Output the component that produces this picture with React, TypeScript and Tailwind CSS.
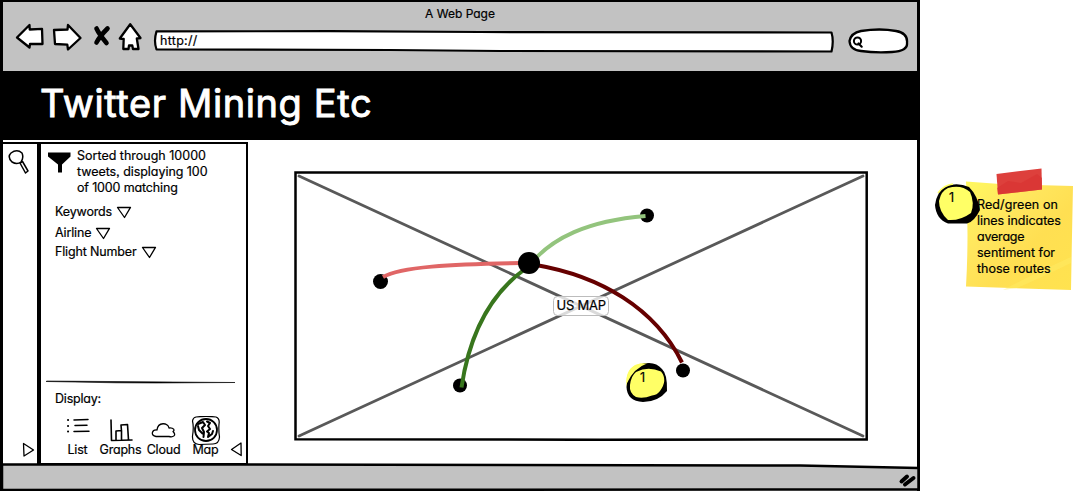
import React from "react";

const ink = { fill: "none", stroke: "#000", strokeLinecap: "round", strokeLinejoin: "round" } as const;

function Toolbar() {
  return (
    <div className="flex h-[44px] items-start">
      <svg className="-mt-[2px] ml-[12px] h-[32px] w-[128px]" viewBox="15 22 128 32">
        <g {...ink} strokeWidth="2.3" fill="#fff">
          <path d="M17 37.5 L29.5 25 L29.7 29.5 L42 28.8 L42.5 44 L30 44 L29.5 47.5 Z" />
          <path d="M54 30 L67.5 29.5 L68 25 L80.500 38 L68 49.500 L67.300 44.700 L55 44 Z" />
          <path d="M130.200 24.200 L140.500 38 L136.800 38.500 L138.500 49 L133 49 L132.300 45.500 L129 45.500 L128.500 49 L123.300 49 L123.700 39 L119.800 38.500 Z" />
        </g>
        <path d="M96.500 28.500 Q99 34 106.500 43 M107.500 28.500 Q100 36 96.500 42.500" {...ink} strokeWidth="4.600" />
      </svg>
      <div className="relative mt-[5px] ml-[10px] flex h-[24px] w-[682px] items-center">
        <svg className="absolute inset-0 h-[24px] w-[682px]" viewBox="153 29 682 24">
          <path d="M156.500 31.300 L330 31.200 L480 32 L831.500 32.500 Q834 41 831.500 51.500 L500 51 L390 50 L156.500 49.500 Q153.500 41 156.500 31.300 Z" {...ink} fill="#fff" strokeWidth="2.200" />
        </svg>
        <span className="relative ml-[7px] text-[12.5px] leading-[18px] tracking-[0.3px]">http://</span>
      </div>
      <svg className="mt-[3px] ml-[12px] h-[28px] w-[64px]" viewBox="847 27 64 28">
        <path d="M861 31 Q880 28 896 31 Q908 33 907 43 Q908 51 892 52 Q875 53 861 51 Q850 50 849.500 41 Q851 33 861 31 Z" {...ink} fill="#fff" strokeWidth="2.300" />
        <circle cx="857.500" cy="41" r="3.600" {...ink} strokeWidth="2" />
        <path d="M858.500 43.500 L861.700 46.700" {...ink} strokeWidth="2.200" />
      </svg>
    </div>
  );
}

function FilterRow({ label, className }: { label: string; className: string }) {
  return (
    <div className={`flex items-center gap-[4px] pl-[14px] ${className}`}>
      <span className="tracking-[-0.15px]">{label}</span>
      <svg className="h-[13px] w-[16px]" viewBox="0 0 16 13">
        <path d="M1.500 1.500 L14.500 1.300 L8.500 11.500 Z" {...ink} strokeWidth="1.300" />
      </svg>
    </div>
  );
}

function DisplayItem({ label, width, children }: { label: string; width: string; children: React.ReactNode }) {
  return (
    <div className={`flex flex-col items-center ${width}`}>
      <svg className="h-[30px] w-[30px]" viewBox="0 0 30 30">{children}</svg>
      <span className="-mt-[4px] leading-[16px] tracking-[-0.2px] whitespace-nowrap">{label}</span>
    </div>
  );
}

function SidePanel() {
  return (
    <aside className="flex h-[323px] w-[209px] flex-none flex-col border-[2.5px] border-black pt-[3px]">
      <div className="flex">
        <svg className="mt-[5px] ml-[7px] h-[22px] w-[24px]" viewBox="0 0 24 22">
          <path d="M0 .5 H22.500 V4.500 L14 12.500 V20.500 H10 V12.500 L0 4.500 Z" fill="#000" />
        </svg>
        <p className="mt-[1px] ml-[5px] leading-[16px] whitespace-nowrap">
          <span className="block">Sorted through 10000</span>
          <span className="block tracking-[-0.05px]">tweets, displaying 100</span>
          <span className="block tracking-[-0.15px]">of 1000 matching</span>
        </p>
      </div>
      <FilterRow label="Keywords" className="mt-[7px] h-[18px]" />
      <FilterRow label="Airline" className="mt-[3px] h-[18px]" />
      <FilterRow label="Flight Number" className="mt-[1px] h-[18px]" />
      <svg className="mt-[119px] ml-[5px] h-[6px] w-[190px]" viewBox="0 0 190 6">
        <path d="M0 1.500 L1 1 L100 1.800 L189 2.500 L110 3 L70 2.800 Z" fill="#000" stroke="#000" strokeWidth=".6" />
      </svg>
      <div className="mt-[5px] ml-[14px] leading-[16px] tracking-[-0.2px]">Display:</div>
      <div className="mt-[9px] flex items-start">
        <div className="ml-[15px] flex flex-none">
          <DisplayItem label="List" width="w-[43px]">
            <g {...ink} strokeWidth="1.500">
              <path d="M11 4 L25 3.500 M12 9.500 L24 9.300 M11 15.500 L26 15.200" />
              <path d="M5 4 h.1 M5 10 h.1 M5 15.500 h.1" strokeWidth="2" />
            </g>
          </DisplayItem>
          <DisplayItem label="Graphs" width="w-[43px]">
            <path d="M5 4 L5.500 24.500 L26 24 M10 24 V15 L15.500 14.500 V24 M15.500 15 L15 9 L21.500 8.500 L22.500 24" {...ink} strokeWidth="1.600" />
          </DisplayItem>
          <DisplayItem label="Cloud" width="w-[43px]">
            <path d="M7 20.500 C1 19.500 3 13.500 8 14 C9 5.500 19 6.500 20 12 C25 11.500 26 14.500 24 15.500 C28 19.500 24 21.500 20 20.500 Z" {...ink} strokeWidth="1.300" />
          </DisplayItem>
          <DisplayItem label="Map" width="w-[41px]">
            <path d="M5 1 Q15 -.3 25 1 Q29 2.500 28 8 Q27.500 15 28.500 21 Q28 28 22 28 L8 28.500 Q1 28 1.500 20 Q3 11 1.500 5 Q2 1.500 5 1" {...ink} strokeWidth="1.200" />
            <circle cx="15" cy="14" r="11" {...ink} strokeWidth="1.800" />
            <path d="M7 8 L12 6 L14 9 L11 12 L13 16 L12.500 21 M7 10 L8 14 L11.500 17.500 M16 5.500 L19 7 L17 10 L19 13 L16 15.500 L18 17 L17 21 L21 18 L22 15" {...ink} strokeWidth="2" />
          </DisplayItem>
        </div>
        <svg className="mt-[25px] ml-[4px] h-[16px] w-[13px]" viewBox="0 0 13 16">
          <path d="M11 2 L11.200 14.500 L1.500 8.500 Z" {...ink} strokeWidth="1.300" />
        </svg>
      </div>
    </aside>
  );
}

function MapArea() {
  return (
    <main className="relative mt-[29px] ml-[46px] h-[270px] w-[574px]">
      <svg className="h-[270px] w-[574px]" viewBox="294 171 574 270">
        <path d="M295.500 172.500 H866.700 V439.500 L600 439.800 L295.500 439.200 Z" {...ink} fill="#fff" strokeWidth="2.500" strokeLinejoin="miter" />
        <path d="M299 176 L863 436 M299 436 L863 176" {...ink} stroke="#595959" strokeWidth="2.800" />
        <rect x="553.500" y="296.500" width="55" height="19" rx="4" fill="#fff" fillOpacity=".78" stroke="#bcbcbc" />
        <g>
          <circle cx="380.500" cy="281.500" r="7.500" />
          <circle cx="460" cy="385.500" r="7" />
          <circle cx="647" cy="215.500" r="7" />
          <circle cx="683" cy="370.500" r="7" />
        </g>
        <g fill="none" strokeWidth="4">
          <path d="M383 277 C400 267 450 264 522 263" stroke="#e06666" />
          <path d="M461.500 387.500 C467 350 481 301 525 269" stroke="#38761d" />
          <path d="M533 261 C553 239 585 221 645.500 216" stroke="#93c47d" />
          <path d="M536 265 C600 276 655 308 682 362.500" stroke="#660000" />
        </g>
        <circle cx="529" cy="263" r="11" />
        <path d="M626.500 386 Q625 371 635 365 Q640 363 646 363 L650 380 Z" fill="#ffff66" />
        <path d="M642 364 Q655 360.500 662 369 Q667.500 374 667 391 Q658 402 643 402 Q627 401 626.500 387 Q628 370 642 364 Z" fill="#000" />
        <path d="M636 372 Q648 366 661 371.500 Q668 380 660 391 Q657 395 652 395.500 Q643 399 636 397 Q629 393 630 385 Q631 376 636 372 Z" fill="#ffff66" />
        <path d="M626.500 383 Q626 367 640 363.800 L647 363.500 Q634 368 627 383 Z" fill="#ffff66" />
      </svg>
      <span className="absolute top-[126px] left-[262.5px] text-[13px] leading-[16px] tracking-[-0.25px] whitespace-nowrap">US MAP</span>
      <span className="absolute top-[199px] left-[346px] text-[12.5px] leading-[16px]">1</span>
    </main>
  );
}

function StickyNote() {
  return (
    <div className="relative mt-[162px] ml-[14px] h-[132px] w-[140px]">
      <svg className="absolute inset-0 h-[132px] w-[140px]" viewBox="934 162 140 132">
        <defs>
          <linearGradient id="paper" x1="0" y1="0" x2="1" y2="1">
            <stop offset="0" stopColor="#fff85f" />
            <stop offset=".35" stopColor="#ffe65e" />
            <stop offset=".6" stopColor="#ffdf52" />
            <stop offset="1" stopColor="#ffe34f" />
          </linearGradient>
        </defs>
        <path d="M966 181.500 L1000 184 L1073 186 L1072 235 L1071 290 L966 286.500 Q969 235 966 181.500 Z" fill="url(#paper)" />
        <path d="M1003 290 Q1035 273 1071 257 L1071 263 Q1038 279 1017 288 Z" fill="#ffed65" opacity=".45" />
        <path d="M996.500 174 L1041.500 168.500 L1042 189.500 L998 194.500 Z" fill="#dd403c" />
        <path d="M997 188 L1008 181 L1021 183 L1037 174 L1042 178 L1042 189.500 L998 194.500 Z" fill="#d83331" opacity=".65" />
      </svg>
      <p className="absolute top-[35px] left-[43px] leading-[16px] whitespace-nowrap">
        <span className="block tracking-[0.1px]">Red/green on</span>
        <span className="block tracking-[-0.05px]">lines indicates</span>
        <span className="block tracking-[-0.2px]">average</span>
        <span className="block">sentiment for</span>
        <span className="block">those routes</span>
      </p>
      <svg className="absolute inset-0 h-[132px] w-[140px]" viewBox="934 162 140 132">
        <path d="M946 186 Q958 182 969 187 Q978 196 980 210 Q974 222 967 223.500 L948 223.500 Q936 219 935 205 Q937 191 946 186 Z" fill="#000" />
        <path d="M948 188 Q961 184 970 192 Q975 203 971 213 Q960 221 948 220 Q939 212 939 201 Q941 191 948 188 Z" fill="#ffff66" />
        <path d="M938 193 Q944 185 953 184" stroke="#ffff66" strokeWidth="1.500" fill="none" />
      </svg>
      <span className="absolute top-[28px] left-[15px] leading-[16px]">1</span>
    </div>
  );
}

export default function App() {
  return (
    <div className="flex h-[492px] w-[1074px] overflow-hidden bg-white font-['Inter','Open_Sans',sans-serif] text-[12.5px] text-black [-webkit-text-stroke:0.2px] [font-feature-settings:'cv11','ss03']">
      <div className="flex h-[491px] w-[920px] flex-none flex-col border-[3px] border-t-2 border-b-0 border-black">
        <header className="h-[69px] bg-[#c2c2c2]">
          <div className="h-[22px] pt-[4px] text-center text-[12px] leading-[16px]">A Web Page</div>
          <Toolbar />
        </header>
        <div className="flex h-[69px] items-center bg-black pb-[5px] pl-[37px]">
          <h1 className="text-[38px] leading-[46px] tracking-[0.6px] whitespace-nowrap text-white [-webkit-text-stroke:0.9px_white]">Twitter Mining Etc</h1>
        </div>
        <div className="flex h-[323px] pt-[2px]">
          <nav className="flex h-[323px] w-[36px] flex-col justify-between border-t-2 border-r-[2.5px] border-black">
            <svg className="mt-[5px] ml-[4px] h-[26px] w-[24px]" viewBox="7 149 24 26">
              <path d="M11 153 Q17 148.500 22 153 Q24 158 21 162 Q17 165 12 162 Q7 157 11 153 M20 163 L22.500 161.500 L28 171 L25.500 173 Z" {...ink} strokeWidth="1.500" />
            </svg>
            <svg className="mb-[7px] ml-[19px] h-[16px] w-[13px]" viewBox="0 0 13 16">
              <path d="M1.500 1.500 L2 14 L11.500 8 Z" {...ink} strokeWidth="1.300" />
            </svg>
          </nav>
          <SidePanel />
          <MapArea />
        </div>
        <footer className="h-[27px]">
          <svg className="-ml-[3px] h-[28px] w-[920px]" viewBox="0 462 920 28">
            <path d="M2 463.500 L250 463.500 L800 464.500 L918.500 467 L918.500 488.500 L2 489 Z" {...ink} fill="#c2c2c2" strokeWidth="2.500" />
            <path d="M901.500 480.500 L907 475.500 M905 483.500 L913.500 477" {...ink} strokeWidth="4" />
          </svg>
        </footer>
      </div>
      <StickyNote />
    </div>
  );
}
